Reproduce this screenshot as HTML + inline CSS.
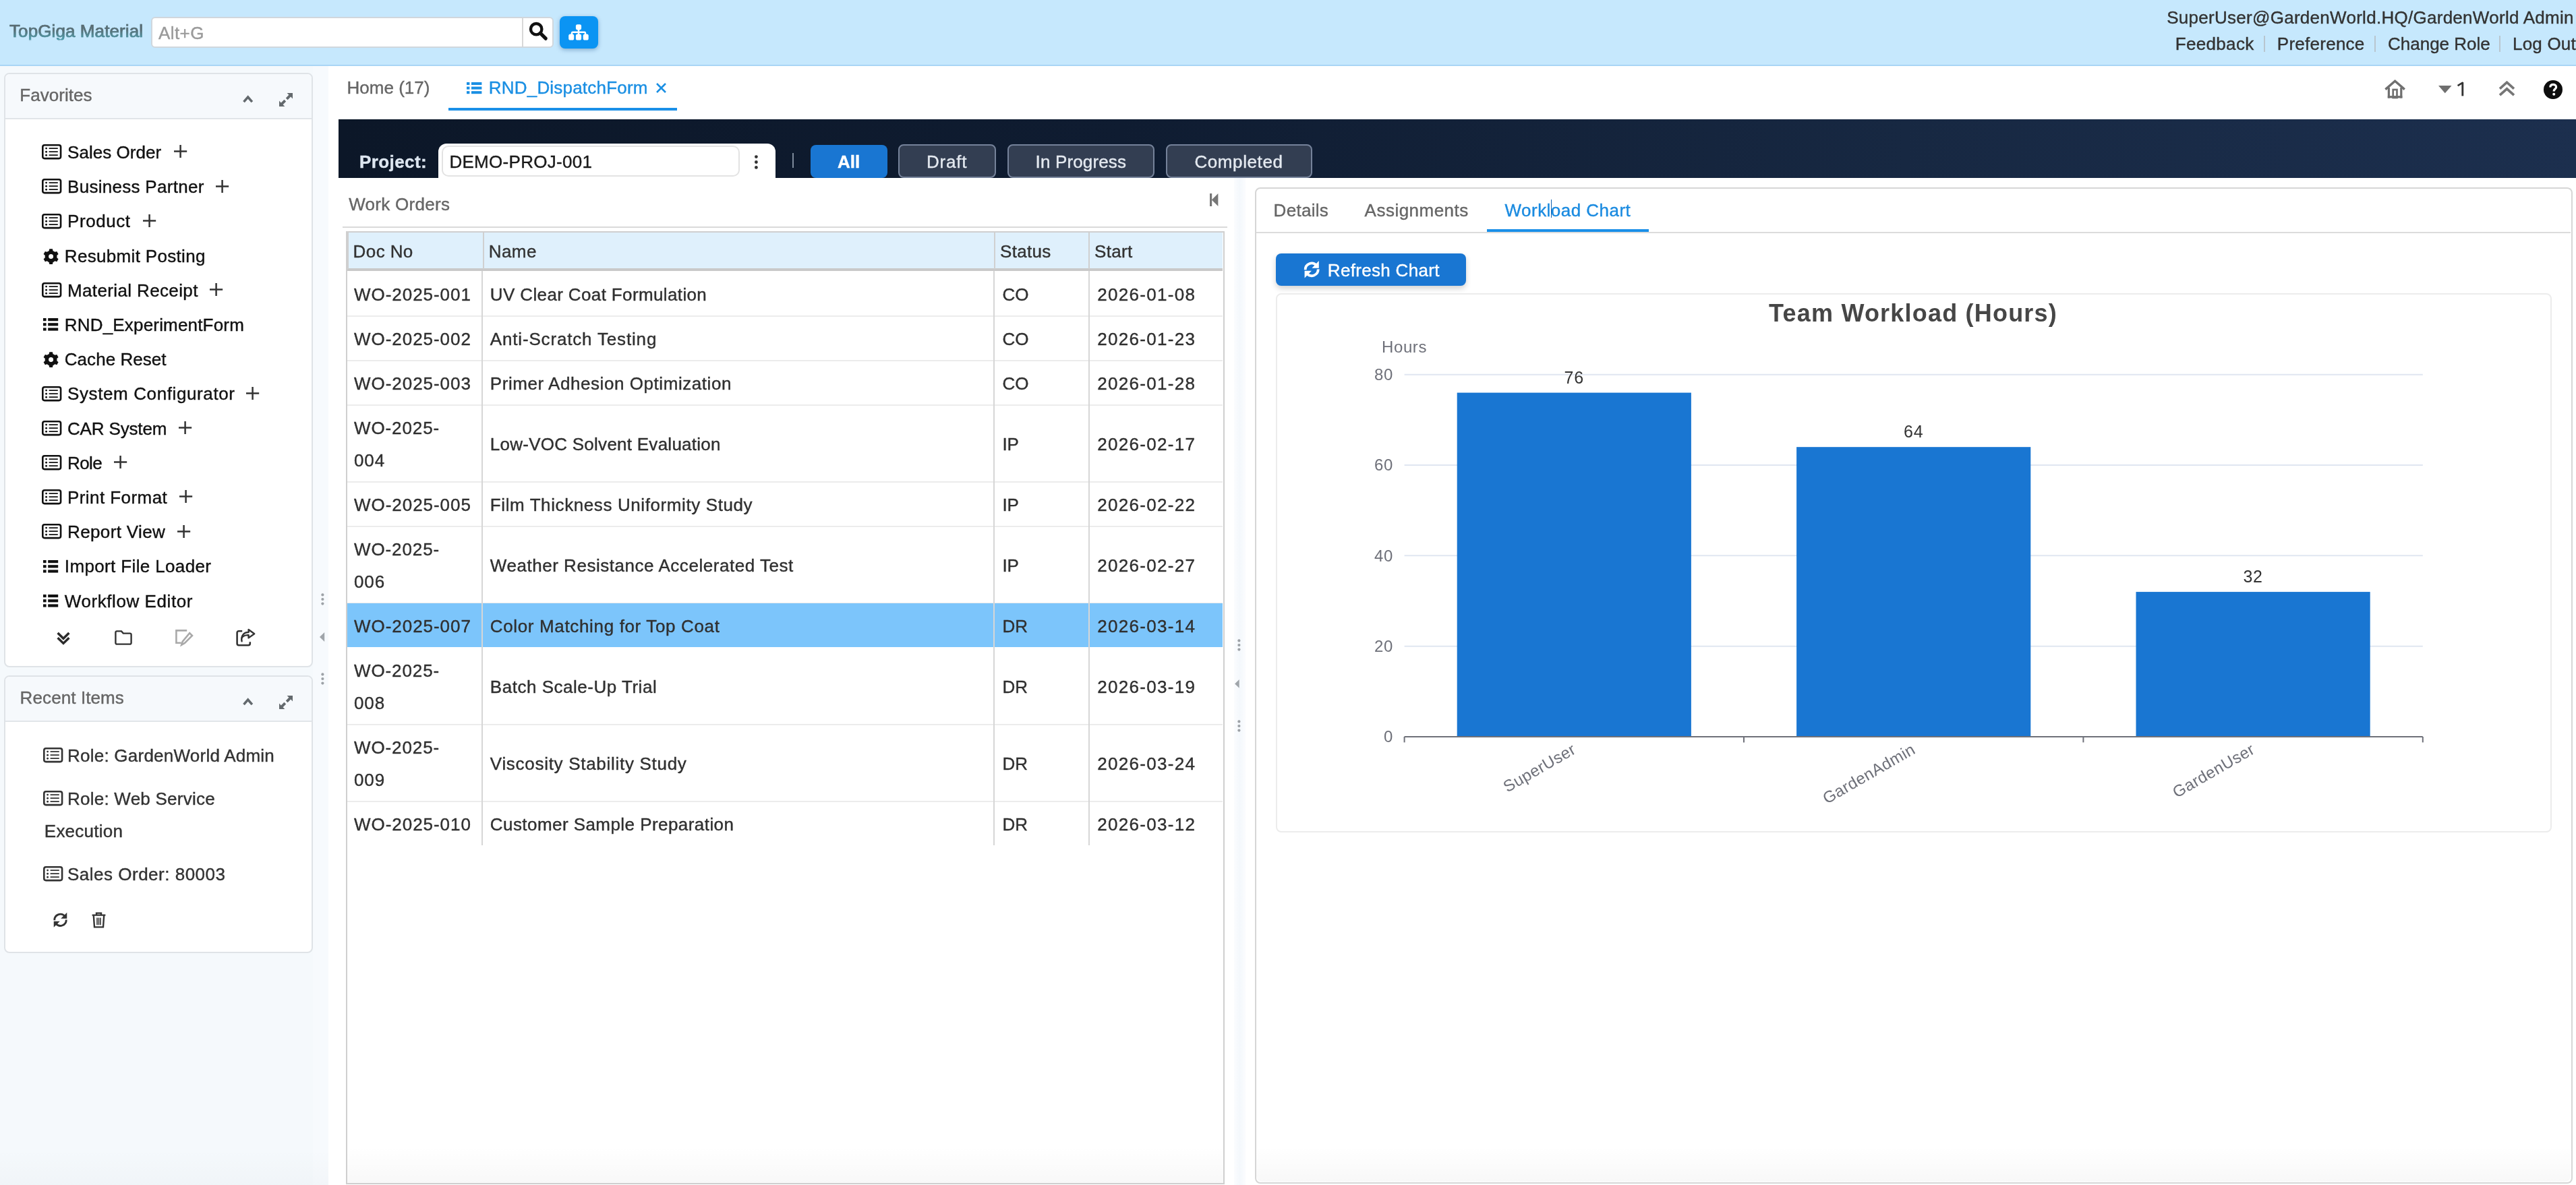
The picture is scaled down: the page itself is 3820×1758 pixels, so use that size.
<!DOCTYPE html>
<html><head><meta charset="utf-8">
<style>
html,body{margin:0;padding:0;background:#fff;overflow:hidden;}
body{width:3820px;height:1758px;}
#root{position:relative;width:1910px;height:879px;zoom:2;will-change:transform;overflow:hidden;font-family:"Liberation Sans",sans-serif;font-size:13px;color:#333;background:#fff;}
.a{position:absolute;}
.t{position:absolute;white-space:nowrap;line-height:1;-webkit-text-stroke:.2px currentColor;}
svg{position:absolute;overflow:visible;}
#hdr{left:0;top:0;width:1910px;height:48px;background:#c6e8fd;border-bottom:1px solid #a9d5f5;}
@media (max-width:2600px){body{width:1910px;height:879px;}#root{zoom:1;}}
</style></head>
<body><div id="root">
<!-- HEADER -->
<div id="hdr" class="a"></div>
<div class="t" style="left:7px;top:16.4px;font-size:13px;letter-spacing:.05px;background:linear-gradient(180deg,#5b666c 0%,#5b6a71 45%,#4aa6b6 100%);-webkit-background-clip:text;background-clip:text;color:transparent;-webkit-text-stroke:.35px rgba(80,130,140,.55);">TopGiga Material</div>
<div class="a" style="left:112px;top:12.3px;width:298.3px;height:23.2px;background:#fff;border:1px solid #d0d7dd;border-radius:3px;box-sizing:border-box;"></div>
<div class="a" style="left:387px;top:13.5px;width:1px;height:21px;background:#d8d8d8;"></div>
<div class="t" style="left:117.5px;top:18.2px;font-size:13px;color:#9a9a9a;letter-spacing:.2px;">Alt+G</div>
<svg style="left:392px;top:16px" width="14" height="14" viewBox="0 0 14 14"><circle cx="5.6" cy="5.6" r="4.1" fill="none" stroke="#111" stroke-width="2.2"/><path d="M8.6 8.6 L12.6 12.6" stroke="#111" stroke-width="2.6" stroke-linecap="round"/></svg>
<div class="a" style="left:415px;top:12px;width:28.5px;height:24px;background:#0b94f3;border-radius:4px;box-shadow:0 1px 3px rgba(0,60,120,.35);"></div>
<svg style="left:421.5px;top:17.8px" width="15" height="12" viewBox="0 0 15 12"><g fill="#fff"><rect x="5.45" y="0.1" width="4.1" height="4.1" rx="1.2"/><rect x="6.9" y="3.5" width="1.2" height="4"/><path d="M1.9 7.6V6.6A1.3 1.3 0 0 1 3.2 5.3H11.8A1.3 1.3 0 0 1 13.1 6.6V7.6H11.9V6.5H3.1V7.6Z"/><rect x="0.1" y="7.3" width="4.0" height="4.5" rx="1.3"/><rect x="5.45" y="7.3" width="4.1" height="4.5" rx="1.3"/><rect x="10.85" y="7.3" width="4.0" height="4.5" rx="1.3"/></g></svg>
<div class="t" style="left:1606.6px;top:6.5px;font-size:13px;color:#333;letter-spacing:.14px;">SuperUser@GardenWorld.HQ/GardenWorld Admin</div>
<div class="t" style="left:1612.9px;top:26px;font-size:13px;color:#333;letter-spacing:.16px;">Feedback</div>
<div class="a" style="left:1678.6px;top:26.5px;width:.8px;height:12px;background:#b9c6cf;"></div>
<div class="t" style="left:1688.4px;top:26px;font-size:13px;color:#333;letter-spacing:.13px;">Preference</div>
<div class="a" style="left:1760.7px;top:26.5px;width:.8px;height:12px;background:#b9c6cf;"></div>
<div class="t" style="left:1770.5px;top:26px;font-size:13px;color:#333;">Change Role</div>
<div class="a" style="left:1853.2px;top:26.5px;width:.8px;height:12px;background:#b9c6cf;"></div>
<div class="t" style="left:1863px;top:26px;font-size:13px;color:#333;letter-spacing:.1px;">Log Out</div>

<!-- LEFT PANEL -->
<div class="a" style="left:0.00px;top:49.00px;width:243.50px;height:830.00px;background:#f5f9fc;"></div>
<div class="a" style="left:232.00px;top:49.00px;width:11.50px;height:830.00px;background:#f7fafd;"></div>
<div class="a" style="left:3.00px;top:54.10px;width:228.90px;height:440.90px;background:#fff;border:1px solid #dfe3e7;border-radius:4px;box-sizing:border-box;"></div>
<div class="a" style="left:4.00px;top:55.10px;width:226.90px;height:32.20px;background:#f6f9fc;border-bottom:1px solid #e1e5e9;border-radius:3px 3px 0 0;"></div>
<div class="t" style="left:14.60px;top:64.10px;font-size:13px;color:#666;letter-spacing:0.03px;">Favorites</div>
<svg style="left:180.00px;top:70.60px;" width="7.7" height="5.8" viewBox="0 0 7.7 5.8"><path d="M.75 5.1L3.85 1.5L6.95 5.1" fill="none" stroke="#63696d" stroke-width="1.75"/></svg>
<svg style="left:207.00px;top:68.80px;" width="10" height="10" viewBox="0 0 10 10"><g fill="#63696d"><path d="M5.8 0H10V4.2L8.6 2.8L6.3 5.1L4.9 3.7L7.2 1.4Z"/><path d="M4.2 10H0V5.8L1.4 7.2L3.7 4.9L5.1 6.3L2.8 8.6Z"/></g></svg>
<svg style="left:31.00px;top:107.05px;" width="14.7" height="11.2" viewBox="0 0 14.7 11.2"><rect x=".65" y=".65" width="13.4" height="9.9" rx="1.4" fill="none" stroke="#111" stroke-width="1.3"/><g fill="#111"><circle cx="3.3" cy="3.05" r=".72"/><circle cx="3.3" cy="5.6" r=".72"/><circle cx="3.3" cy="8.1" r=".72"/></g><g stroke="#111" stroke-width=".9"><path d="M5.3 3.05H11.9M5.3 5.6H11.9M5.3 8.1H11.9"/></g></svg>
<div class="t" style="left:50.00px;top:106.45px;font-size:13px;color:#111;letter-spacing:0.02px;">Sales Order</div>
<svg style="left:129.00px;top:107.65px;" width="9.6" height="9.5" viewBox="0 0 9.6 9.5"><path d="M4.8 0V9.5M0 4.75H9.6" stroke="#333" stroke-width="1.25"/></svg>
<svg style="left:31.00px;top:132.65px;" width="14.7" height="11.2" viewBox="0 0 14.7 11.2"><rect x=".65" y=".65" width="13.4" height="9.9" rx="1.4" fill="none" stroke="#111" stroke-width="1.3"/><g fill="#111"><circle cx="3.3" cy="3.05" r=".72"/><circle cx="3.3" cy="5.6" r=".72"/><circle cx="3.3" cy="8.1" r=".72"/></g><g stroke="#111" stroke-width=".9"><path d="M5.3 3.05H11.9M5.3 5.6H11.9M5.3 8.1H11.9"/></g></svg>
<div class="t" style="left:50.00px;top:132.05px;font-size:13px;color:#111;letter-spacing:0.144px;">Business Partner</div>
<svg style="left:160.00px;top:133.25px;" width="9.6" height="9.5" viewBox="0 0 9.6 9.5"><path d="M4.8 0V9.5M0 4.75H9.6" stroke="#333" stroke-width="1.25"/></svg>
<svg style="left:31.00px;top:158.25px;" width="14.7" height="11.2" viewBox="0 0 14.7 11.2"><rect x=".65" y=".65" width="13.4" height="9.9" rx="1.4" fill="none" stroke="#111" stroke-width="1.3"/><g fill="#111"><circle cx="3.3" cy="3.05" r=".72"/><circle cx="3.3" cy="5.6" r=".72"/><circle cx="3.3" cy="8.1" r=".72"/></g><g stroke="#111" stroke-width=".9"><path d="M5.3 3.05H11.9M5.3 5.6H11.9M5.3 8.1H11.9"/></g></svg>
<div class="t" style="left:50.00px;top:157.65px;font-size:13px;color:#111;letter-spacing:0.284px;">Product</div>
<svg style="left:106.00px;top:158.85px;" width="9.6" height="9.5" viewBox="0 0 9.6 9.5"><path d="M4.8 0V9.5M0 4.75H9.6" stroke="#333" stroke-width="1.25"/></svg>
<svg style="left:31.75px;top:184.25px;" width="11.6" height="11.6" viewBox="0 0 11.6 11.6"><path d="M10.18 6.61 L11.30 7.64 L10.15 9.64 L8.69 9.18 L8.37 9.43 L8.03 9.65 L7.66 9.84 L7.28 10.00 L6.95 11.48 L4.65 11.48 L4.32 10.00 L3.94 9.84 L3.57 9.65 L3.23 9.43 L2.91 9.18 L1.45 9.64 L0.30 7.64 L1.42 6.61 L1.37 6.21 L1.35 5.80 L1.37 5.39 L1.42 4.99 L0.30 3.96 L1.45 1.96 L2.91 2.42 L3.23 2.17 L3.58 1.95 L3.94 1.76 L4.32 1.60 L4.65 0.12 L6.95 0.12 L7.28 1.60 L7.66 1.76 L8.02 1.95 L8.37 2.17 L8.69 2.42 L10.15 1.96 L11.30 3.96 L10.18 4.99 L10.23 5.39 L10.25 5.80 L10.23 6.21Z M5.8 4.05 A1.75 1.75 0 1 0 5.8 7.55 A1.75 1.75 0 1 0 5.8 4.05Z" fill="#111" fill-rule="evenodd"/></svg>
<div class="t" style="left:47.90px;top:183.25px;font-size:13px;color:#111;letter-spacing:0.163px;">Resubmit Posting</div>
<svg style="left:31.00px;top:209.45px;" width="14.7" height="11.2" viewBox="0 0 14.7 11.2"><rect x=".65" y=".65" width="13.4" height="9.9" rx="1.4" fill="none" stroke="#111" stroke-width="1.3"/><g fill="#111"><circle cx="3.3" cy="3.05" r=".72"/><circle cx="3.3" cy="5.6" r=".72"/><circle cx="3.3" cy="8.1" r=".72"/></g><g stroke="#111" stroke-width=".9"><path d="M5.3 3.05H11.9M5.3 5.6H11.9M5.3 8.1H11.9"/></g></svg>
<div class="t" style="left:50.00px;top:208.85px;font-size:13px;color:#111;letter-spacing:0.185px;">Material Receipt</div>
<svg style="left:155.60px;top:210.05px;" width="9.6" height="9.5" viewBox="0 0 9.6 9.5"><path d="M4.8 0V9.5M0 4.75H9.6" stroke="#333" stroke-width="1.25"/></svg>
<svg style="left:32.20px;top:236.15px;" width="11.1" height="9.3" viewBox="0 0 11.1 9.3"><g fill="#111"><rect x="0" y="0" width="2.3" height="2.1"/><rect x="0" y="3.6" width="2.3" height="2.1"/><rect x="0" y="7.2" width="2.3" height="2.1"/><rect x="3.6" y="0" width="7.5" height="2.1"/><rect x="3.6" y="3.6" width="7.5" height="2.1"/><rect x="3.6" y="7.2" width="7.5" height="2.1"/></g></svg>
<div class="t" style="left:47.90px;top:234.45px;font-size:13px;color:#111;letter-spacing:0.09px;">RND_ExperimentForm</div>
<svg style="left:31.75px;top:261.05px;" width="11.6" height="11.6" viewBox="0 0 11.6 11.6"><path d="M10.18 6.61 L11.30 7.64 L10.15 9.64 L8.69 9.18 L8.37 9.43 L8.03 9.65 L7.66 9.84 L7.28 10.00 L6.95 11.48 L4.65 11.48 L4.32 10.00 L3.94 9.84 L3.57 9.65 L3.23 9.43 L2.91 9.18 L1.45 9.64 L0.30 7.64 L1.42 6.61 L1.37 6.21 L1.35 5.80 L1.37 5.39 L1.42 4.99 L0.30 3.96 L1.45 1.96 L2.91 2.42 L3.23 2.17 L3.58 1.95 L3.94 1.76 L4.32 1.60 L4.65 0.12 L6.95 0.12 L7.28 1.60 L7.66 1.76 L8.02 1.95 L8.37 2.17 L8.69 2.42 L10.15 1.96 L11.30 3.96 L10.18 4.99 L10.23 5.39 L10.25 5.80 L10.23 6.21Z M5.8 4.05 A1.75 1.75 0 1 0 5.8 7.55 A1.75 1.75 0 1 0 5.8 4.05Z" fill="#111" fill-rule="evenodd"/></svg>
<div class="t" style="left:47.90px;top:260.05px;font-size:13px;color:#111;letter-spacing:0.022px;">Cache Reset</div>
<svg style="left:31.00px;top:286.25px;" width="14.7" height="11.2" viewBox="0 0 14.7 11.2"><rect x=".65" y=".65" width="13.4" height="9.9" rx="1.4" fill="none" stroke="#111" stroke-width="1.3"/><g fill="#111"><circle cx="3.3" cy="3.05" r=".72"/><circle cx="3.3" cy="5.6" r=".72"/><circle cx="3.3" cy="8.1" r=".72"/></g><g stroke="#111" stroke-width=".9"><path d="M5.3 3.05H11.9M5.3 5.6H11.9M5.3 8.1H11.9"/></g></svg>
<div class="t" style="left:50.00px;top:285.65px;font-size:13px;color:#111;letter-spacing:0.305px;">System Configurator</div>
<svg style="left:182.70px;top:286.85px;" width="9.6" height="9.5" viewBox="0 0 9.6 9.5"><path d="M4.8 0V9.5M0 4.75H9.6" stroke="#333" stroke-width="1.25"/></svg>
<svg style="left:31.00px;top:311.85px;" width="14.7" height="11.2" viewBox="0 0 14.7 11.2"><rect x=".65" y=".65" width="13.4" height="9.9" rx="1.4" fill="none" stroke="#111" stroke-width="1.3"/><g fill="#111"><circle cx="3.3" cy="3.05" r=".72"/><circle cx="3.3" cy="5.6" r=".72"/><circle cx="3.3" cy="8.1" r=".72"/></g><g stroke="#111" stroke-width=".9"><path d="M5.3 3.05H11.9M5.3 5.6H11.9M5.3 8.1H11.9"/></g></svg>
<div class="t" style="left:50.00px;top:311.25px;font-size:13px;color:#111;letter-spacing:-0.081px;">CAR System</div>
<svg style="left:132.60px;top:312.45px;" width="9.6" height="9.5" viewBox="0 0 9.6 9.5"><path d="M4.8 0V9.5M0 4.75H9.6" stroke="#333" stroke-width="1.25"/></svg>
<svg style="left:31.00px;top:337.45px;" width="14.7" height="11.2" viewBox="0 0 14.7 11.2"><rect x=".65" y=".65" width="13.4" height="9.9" rx="1.4" fill="none" stroke="#111" stroke-width="1.3"/><g fill="#111"><circle cx="3.3" cy="3.05" r=".72"/><circle cx="3.3" cy="5.6" r=".72"/><circle cx="3.3" cy="8.1" r=".72"/></g><g stroke="#111" stroke-width=".9"><path d="M5.3 3.05H11.9M5.3 5.6H11.9M5.3 8.1H11.9"/></g></svg>
<div class="t" style="left:50.00px;top:336.85px;font-size:13px;color:#111;letter-spacing:-0.287px;">Role</div>
<svg style="left:84.50px;top:338.05px;" width="9.6" height="9.5" viewBox="0 0 9.6 9.5"><path d="M4.8 0V9.5M0 4.75H9.6" stroke="#333" stroke-width="1.25"/></svg>
<svg style="left:31.00px;top:363.05px;" width="14.7" height="11.2" viewBox="0 0 14.7 11.2"><rect x=".65" y=".65" width="13.4" height="9.9" rx="1.4" fill="none" stroke="#111" stroke-width="1.3"/><g fill="#111"><circle cx="3.3" cy="3.05" r=".72"/><circle cx="3.3" cy="5.6" r=".72"/><circle cx="3.3" cy="8.1" r=".72"/></g><g stroke="#111" stroke-width=".9"><path d="M5.3 3.05H11.9M5.3 5.6H11.9M5.3 8.1H11.9"/></g></svg>
<div class="t" style="left:50.00px;top:362.45px;font-size:13px;color:#111;letter-spacing:0.215px;">Print Format</div>
<svg style="left:132.80px;top:363.65px;" width="9.6" height="9.5" viewBox="0 0 9.6 9.5"><path d="M4.8 0V9.5M0 4.75H9.6" stroke="#333" stroke-width="1.25"/></svg>
<svg style="left:31.00px;top:388.65px;" width="14.7" height="11.2" viewBox="0 0 14.7 11.2"><rect x=".65" y=".65" width="13.4" height="9.9" rx="1.4" fill="none" stroke="#111" stroke-width="1.3"/><g fill="#111"><circle cx="3.3" cy="3.05" r=".72"/><circle cx="3.3" cy="5.6" r=".72"/><circle cx="3.3" cy="8.1" r=".72"/></g><g stroke="#111" stroke-width=".9"><path d="M5.3 3.05H11.9M5.3 5.6H11.9M5.3 8.1H11.9"/></g></svg>
<div class="t" style="left:50.00px;top:388.05px;font-size:13px;color:#111;letter-spacing:0.184px;">Report View</div>
<svg style="left:131.30px;top:389.25px;" width="9.6" height="9.5" viewBox="0 0 9.6 9.5"><path d="M4.8 0V9.5M0 4.75H9.6" stroke="#333" stroke-width="1.25"/></svg>
<svg style="left:32.20px;top:415.35px;" width="11.1" height="9.3" viewBox="0 0 11.1 9.3"><g fill="#111"><rect x="0" y="0" width="2.3" height="2.1"/><rect x="0" y="3.6" width="2.3" height="2.1"/><rect x="0" y="7.2" width="2.3" height="2.1"/><rect x="3.6" y="0" width="7.5" height="2.1"/><rect x="3.6" y="3.6" width="7.5" height="2.1"/><rect x="3.6" y="7.2" width="7.5" height="2.1"/></g></svg>
<div class="t" style="left:47.90px;top:413.65px;font-size:13px;color:#111;letter-spacing:0.183px;">Import File Loader</div>
<svg style="left:32.20px;top:440.95px;" width="11.1" height="9.3" viewBox="0 0 11.1 9.3"><g fill="#111"><rect x="0" y="0" width="2.3" height="2.1"/><rect x="0" y="3.6" width="2.3" height="2.1"/><rect x="0" y="7.2" width="2.3" height="2.1"/><rect x="3.6" y="0" width="7.5" height="2.1"/><rect x="3.6" y="3.6" width="7.5" height="2.1"/><rect x="3.6" y="7.2" width="7.5" height="2.1"/></g></svg>
<div class="t" style="left:47.90px;top:439.25px;font-size:13px;color:#111;letter-spacing:0.287px;">Workflow Editor</div>
<svg style="left:41.80px;top:468.60px;" width="10" height="9.6" viewBox="0 0 10 9.6"><path d="M.8 1L5 5.1L9.2 1M.8 4.6L5 8.7L9.2 4.6" fill="none" stroke="#2b2b2b" stroke-width="1.75"/></svg>
<svg style="left:85.00px;top:467.50px;" width="13" height="11" viewBox="0 0 13 11"><path d="M1.6 .7H5L6.4 2.3H11.4A.9 .9 0 0 1 12.3 3.2V9.4A.9 .9 0 0 1 11.4 10.3H1.6A.9 .9 0 0 1 .7 9.4V1.6A.9 .9 0 0 1 1.6 .7Z" fill="none" stroke="#333" stroke-width="1.2"/></svg>
<svg style="left:130.00px;top:466.80px;" width="13.2" height="12.4" viewBox="0 0 13.2 12.4"><path d="M8.6 .7H.7V9.9H4.4" fill="none" stroke="#a9a9a9" stroke-width="1.3"/><path d="M10.6 2.6L12.5 4.5L7 10L4.6 11.4L5.4 8.8Z" fill="none" stroke="#a9a9a9" stroke-width="1.3"/></svg>
<svg style="left:175.00px;top:466.50px;" width="14.5" height="12.8" viewBox="0 0 14.5 12.8"><path d="M4.6 1.6H2A1.2 1.2 0 0 0 .8 2.8V10.9A1.2 1.2 0 0 0 2 12.1H9.2A1.2 1.2 0 0 0 10.4 10.9V9.6" fill="none" stroke="#333" stroke-width="1.3"/><path d="M4.3 9.2C3.4 6.2 5.6 4.4 9.3 4.6V6.7L13.6 3.6L9.3 .5V2.5C5.8 2.4 3.4 5.2 4.3 9.2Z" fill="none" stroke="#333" stroke-width="1.2" stroke-linejoin="round"/></svg>
<div class="a" style="left:3.00px;top:501.00px;width:228.90px;height:206.00px;background:#fff;border:1px solid #dfe3e7;border-radius:4px;box-sizing:border-box;"></div>
<div class="a" style="left:4.00px;top:502.00px;width:226.90px;height:32.50px;background:#f6f9fc;border-bottom:1px solid #e1e5e9;border-radius:3px 3px 0 0;"></div>
<div class="t" style="left:14.80px;top:510.90px;font-size:13px;color:#666;letter-spacing:0.05px;">Recent Items</div>
<svg style="left:180.00px;top:517.60px;" width="7.7" height="5.8" viewBox="0 0 7.7 5.8"><path d="M.75 5.1L3.85 1.5L6.95 5.1" fill="none" stroke="#63696d" stroke-width="1.75"/></svg>
<svg style="left:206.80px;top:515.80px;" width="10" height="10" viewBox="0 0 10 10"><g fill="#63696d"><path d="M5.8 0H10V4.2L8.6 2.8L6.3 5.1L4.9 3.7L7.2 1.4Z"/><path d="M4.2 10H0V5.8L1.4 7.2L3.7 4.9L5.1 6.3L2.8 8.6Z"/></g></svg>
<svg style="left:32.00px;top:554.60px;" width="14.7" height="11.2" viewBox="0 0 14.7 11.2"><rect x=".65" y=".65" width="13.4" height="9.9" rx="1.4" fill="none" stroke="#333" stroke-width="1.3"/><g fill="#333"><circle cx="3.3" cy="3.05" r=".72"/><circle cx="3.3" cy="5.6" r=".72"/><circle cx="3.3" cy="8.1" r=".72"/></g><g stroke="#333" stroke-width=".9"><path d="M5.3 3.05H11.9M5.3 5.6H11.9M5.3 8.1H11.9"/></g></svg>
<div class="t" style="left:50.00px;top:554.00px;font-size:13px;color:#333;letter-spacing:0.12px;">Role: GardenWorld Admin</div>
<svg style="left:32.00px;top:586.60px;" width="14.7" height="11.2" viewBox="0 0 14.7 11.2"><rect x=".65" y=".65" width="13.4" height="9.9" rx="1.4" fill="none" stroke="#333" stroke-width="1.3"/><g fill="#333"><circle cx="3.3" cy="3.05" r=".72"/><circle cx="3.3" cy="5.6" r=".72"/><circle cx="3.3" cy="8.1" r=".72"/></g><g stroke="#333" stroke-width=".9"><path d="M5.3 3.05H11.9M5.3 5.6H11.9M5.3 8.1H11.9"/></g></svg>
<div class="t" style="left:50.00px;top:586.00px;font-size:13px;color:#333;letter-spacing:0.12px;">Role: Web Service</div>
<div class="t" style="left:32.90px;top:610.00px;font-size:13px;color:#333;letter-spacing:0.12px;">Execution</div>
<svg style="left:32.00px;top:642.60px;" width="14.7" height="11.2" viewBox="0 0 14.7 11.2"><rect x=".65" y=".65" width="13.4" height="9.9" rx="1.4" fill="none" stroke="#333" stroke-width="1.3"/><g fill="#333"><circle cx="3.3" cy="3.05" r=".72"/><circle cx="3.3" cy="5.6" r=".72"/><circle cx="3.3" cy="8.1" r=".72"/></g><g stroke="#333" stroke-width=".9"><path d="M5.3 3.05H11.9M5.3 5.6H11.9M5.3 8.1H11.9"/></g></svg>
<div class="t" style="left:50.00px;top:642.00px;font-size:13px;color:#333;letter-spacing:0.25px;">Sales Order: 80003</div>
<svg style="left:39.00px;top:676.70px;" width="11.5" height="11.8" viewBox="0 0 12.2 12.8"><path d="M1.35 6.6A4.75 4.75 0 0 1 9.6 3.3M10.85 6.2A4.75 4.75 0 0 1 2.6 9.5" fill="none" stroke="#333" stroke-width="1.55"/><path d="M11.4 .4V5.3H6.5Z M.8 12.4V7.5H5.7Z" fill="#333"/></svg>
<svg style="left:68.00px;top:676.50px;" width="10.5" height="12" viewBox="0 0 10.5 12"><path d="M.3 2.3H10.2M3.5 2.2V.8H7V2.2" fill="none" stroke="#333" stroke-width="1.2"/><path d="M1.4 2.6L2 11.2H8.5L9.1 2.6" fill="none" stroke="#333" stroke-width="1.2"/><path d="M4 4.3V9.6M5.25 4.3V9.6M6.5 4.3V9.6" stroke="#333" stroke-width=".8"/></svg>
<div class="a" style="left:0.00px;top:852.00px;width:243.50px;height:27.00px;background:linear-gradient(180deg,rgba(0,20,60,0),rgba(0,20,60,.018));"></div>
<svg style="left:237.80px;top:440.00px;" width="2.4" height="9" viewBox="0 0 2.4 9"><g fill="#9da2a7"><circle cx="1.2" cy="1.2" r="1.05"/><circle cx="1.2" cy="4.5" r="1.05"/><circle cx="1.2" cy="7.8" r="1.05"/></g></svg>
<svg style="left:237.80px;top:499.00px;" width="2.4" height="9" viewBox="0 0 2.4 9"><g fill="#9da2a7"><circle cx="1.2" cy="1.2" r="1.05"/><circle cx="1.2" cy="4.5" r="1.05"/><circle cx="1.2" cy="7.8" r="1.05"/></g></svg>
<svg style="left:237.00px;top:469.00px;" width="3.6" height="7" viewBox="0 0 3.6 7"><path d="M3.6 0V7L0 3.5Z" fill="#a0a5aa"/></svg>
<!-- MAIN -->
<div class="t" style="left:257.30px;top:58.60px;font-size:13px;color:#666;">Home (17)</div>
<svg style="left:346.20px;top:61.20px;" width="11.2" height="8.6" viewBox="0 0 11.2 8.6"><g fill="#1a8fe3"><rect x="0" y="0" width="2.2" height="2"/><rect x="0" y="3.3" width="2.2" height="2"/><rect x="0" y="6.6" width="2.2" height="2"/><rect x="3.5" y="0" width="7.7" height="2"/><rect x="3.5" y="3.3" width="7.7" height="2"/><rect x="3.5" y="6.6" width="7.7" height="2"/></g></svg>
<div class="t" style="left:362.40px;top:58.60px;font-size:13px;color:#1a8fe3;letter-spacing:0.1px;">RND_DispatchForm</div>
<svg style="left:486.30px;top:61.50px;" width="7.5" height="7.5" viewBox="0 0 7.5 7.5"><path d="M.5 .5L7 7M7 .5L.5 7" stroke="#1a8fe3" stroke-width="1.3"/></svg>
<div class="a" style="left:332.60px;top:79.80px;width:169.20px;height:2.00px;background:#1a8fe8;"></div>
<svg style="left:1768.00px;top:59.20px;" width="15.6" height="13.8" viewBox="0 0 15.6 13.8"><path d="M.7 7.3L7.8 1.1L14.9 7.3" fill="none" stroke="#6f6f6f" stroke-width="1.7"/><path d="M3.2 6V13.7M12.4 6V13.7" stroke="#6f6f6f" stroke-width="1.6"/><path d="M2.4 12.9H13.2" stroke="#6f6f6f" stroke-width="1.7"/><rect x="6.35" y="7.5" width="2.9" height="6" fill="none" stroke="#6f6f6f" stroke-width="1.35"/></svg>
<svg style="left:1807.80px;top:63.60px;" width="9.8" height="5.6" viewBox="0 0 9.8 5.6"><path d="M0 0H9.8L4.9 5.6Z" fill="#6f6f6f"/></svg>
<svg style="left:1822.20px;top:60.90px;" width="4.8" height="10.2" viewBox="0 0 4.8 10.2"><path d="M3.9 0V10.2" stroke="#333" stroke-width="1.45"/><path d="M4.2 .2L.3 2.6" stroke="#333" stroke-width="1.3"/></svg>
<svg style="left:1852.50px;top:60.00px;" width="12.5" height="11.3" viewBox="0 0 12.5 11.3"><path d="M1 5.8L6.25 1.1L11.5 5.8M1 10.6L6.25 5.9L11.5 10.6" fill="none" stroke="#767676" stroke-width="1.85"/></svg>
<svg style="left:1886.00px;top:59.40px;" width="14" height="14" viewBox="0 0 14 14"><circle cx="7" cy="7" r="7" fill="#0d0d0d"/><path d="M4.9 5.3C4.9 4 5.8 3.2 7.1 3.2C8.4 3.2 9.3 4 9.3 5.1C9.3 6.4 7.6 6.6 7.6 8V8.3" fill="none" stroke="#fff" stroke-width="1.6"/><circle cx="7.6" cy="10.4" r="1" fill="#fff"/></svg>
<div class="a" style="left:251.00px;top:88.70px;width:1659.00px;height:43.30px;background:linear-gradient(90deg,#0c1728 0%,#0f1c31 35%,#172842 70%,#1c2f4e 100%);overflow:hidden;"></div>
<div class="t" style="left:266.50px;top:113.50px;font-size:13px;color:#dde6f0;letter-spacing:0.2px;font-weight:bold;">Project:</div>
<div class="a" style="left:324.80px;top:106.30px;width:250.10px;height:25.70px;background:#fff;border-radius:6px 6px 0 0;"></div>
<div class="a" style="left:327.60px;top:108.00px;width:220.80px;height:23.20px;background:#fff;border:1px solid #e3e3e3;border-radius:5px;box-sizing:border-box;"></div>
<div class="t" style="left:333.20px;top:113.50px;font-size:13px;color:#1a1a1a;letter-spacing:0.15px;">DEMO-PROJ-001</div>
<svg style="left:559.70px;top:115.00px;" width="2.4" height="10.5" viewBox="0 0 2.4 10.5"><g fill="#333"><circle cx="1.2" cy="1.3" r="1.2"/><circle cx="1.2" cy="5.25" r="1.2"/><circle cx="1.2" cy="9.2" r="1.2"/></g></svg>
<div class="a" style="left:587.50px;top:113.40px;width:0.90px;height:11.10px;background:#7d8a9b;"></div>
<div class="a" style="left:600.80px;top:107.40px;width:57.30px;height:24.60px;background:#1976d2;border-radius:4px;"></div>
<div class="t" style="left:621.00px;top:113.50px;font-size:13px;color:#fff;font-weight:bold;">All</div>
<div class="a" style="left:666.10px;top:107.20px;width:72.30px;height:24.80px;background:#333e52;border:1px solid #75829a;border-radius:4px;box-sizing:border-box;"></div>
<div class="t" style="left:687.00px;top:113.50px;font-size:13px;color:#e4e9f0;letter-spacing:0.4px;">Draft</div>
<div class="a" style="left:746.80px;top:107.20px;width:109.30px;height:24.80px;background:#333e52;border:1px solid #75829a;border-radius:4px;box-sizing:border-box;"></div>
<div class="t" style="left:767.80px;top:113.50px;font-size:13px;color:#e4e9f0;letter-spacing:0.07px;">In Progress</div>
<div class="a" style="left:864.60px;top:107.20px;width:108.20px;height:24.80px;background:#333e52;border:1px solid #75829a;border-radius:4px;box-sizing:border-box;"></div>
<div class="t" style="left:885.70px;top:113.50px;font-size:13px;color:#e4e9f0;letter-spacing:0.3px;">Completed</div>
<div class="t" style="left:258.60px;top:144.90px;font-size:13px;color:#666;letter-spacing:0.15px;">Work Orders</div>
<svg style="left:897.00px;top:143.50px;" width="6.2" height="9.5" viewBox="0 0 6.2 9.5"><rect x="0" y="0" width="1.6" height="9.5" fill="#777"/><path d="M6.2 0V9.5L1.4 4.75Z" fill="#777"/></svg>
<div class="a" style="left:254.00px;top:168.00px;width:656.00px;height:1.00px;background:#dadada;"></div>
<div class="a" style="left:256.50px;top:171.30px;width:651.50px;height:707.00px;background:#fff;border:1px solid #cfcfcf;box-sizing:border-box;"></div>
<div class="a" style="left:257.50px;top:172.30px;width:649.00px;height:26.70px;background:#dff0fc;"></div>
<div class="a" style="left:257.50px;top:199.00px;width:649.00px;height:2.00px;background:#c9c9c9;"></div>
<div class="a" style="left:257.50px;top:172.30px;width:1.20px;height:27.00px;background:#cfcfcf;"></div>
<div class="a" style="left:357.80px;top:172.30px;width:1.00px;height:27.00px;background:#d0d0d0;"></div>
<div class="a" style="left:737.10px;top:172.30px;width:1.00px;height:27.00px;background:#d0d0d0;"></div>
<div class="a" style="left:807.00px;top:172.30px;width:1.00px;height:27.00px;background:#d0d0d0;"></div>
<div class="t" style="left:261.80px;top:179.80px;font-size:13px;color:#333;letter-spacing:0.2px;">Doc No</div>
<div class="t" style="left:362.40px;top:179.80px;font-size:13px;color:#333;letter-spacing:0.2px;">Name</div>
<div class="t" style="left:741.50px;top:179.80px;font-size:13px;color:#333;letter-spacing:0.15px;">Status</div>
<div class="t" style="left:811.50px;top:179.80px;font-size:13px;color:#333;letter-spacing:0.15px;">Start</div>
<div class="a" style="left:257.50px;top:233.80px;width:649.00px;height:1.00px;background:#ececec;"></div>
<div class="t" style="left:262.50px;top:212.20px;font-size:13px;color:#303030;letter-spacing:0.48px;">WO-2025-001</div>
<div class="t" style="left:363.40px;top:212.20px;font-size:13px;color:#303030;letter-spacing:0.18559999999999946px;">UV Clear Coat Formulation</div>
<div class="t" style="left:743.20px;top:212.20px;font-size:13px;color:#303030;">CO</div>
<div class="t" style="left:813.60px;top:212.20px;font-size:13px;color:#303030;letter-spacing:0.65px;">2026-01-08</div>
<div class="a" style="left:257.50px;top:266.80px;width:649.00px;height:1.00px;background:#ececec;"></div>
<div class="t" style="left:262.50px;top:245.20px;font-size:13px;color:#303030;letter-spacing:0.48px;">WO-2025-002</div>
<div class="t" style="left:363.40px;top:245.20px;font-size:13px;color:#303030;letter-spacing:0.41600000000000037px;">Anti-Scratch Testing</div>
<div class="t" style="left:743.20px;top:245.20px;font-size:13px;color:#303030;">CO</div>
<div class="t" style="left:813.60px;top:245.20px;font-size:13px;color:#303030;letter-spacing:0.65px;">2026-01-23</div>
<div class="a" style="left:257.50px;top:299.80px;width:649.00px;height:1.00px;background:#ececec;"></div>
<div class="t" style="left:262.50px;top:278.20px;font-size:13px;color:#303030;letter-spacing:0.48px;">WO-2025-003</div>
<div class="t" style="left:363.40px;top:278.20px;font-size:13px;color:#303030;letter-spacing:0.28035714285714264px;">Primer Adhesion Optimization</div>
<div class="t" style="left:743.20px;top:278.20px;font-size:13px;color:#303030;">CO</div>
<div class="t" style="left:813.60px;top:278.20px;font-size:13px;color:#303030;letter-spacing:0.65px;">2026-01-28</div>
<div class="a" style="left:257.50px;top:356.80px;width:649.00px;height:1.00px;background:#ececec;"></div>
<div class="t" style="left:262.50px;top:311.00px;font-size:13px;color:#303030;letter-spacing:0.45px;">WO-2025-</div>
<div class="t" style="left:262.50px;top:335.00px;font-size:13px;color:#303030;letter-spacing:0.45px;">004</div>
<div class="t" style="left:363.40px;top:323.20px;font-size:13px;color:#303030;letter-spacing:0.1284615384615386px;">Low-VOC Solvent Evaluation</div>
<div class="t" style="left:743.20px;top:323.20px;font-size:13px;color:#303030;">IP</div>
<div class="t" style="left:813.60px;top:323.20px;font-size:13px;color:#303030;letter-spacing:0.65px;">2026-02-17</div>
<div class="a" style="left:257.50px;top:389.80px;width:649.00px;height:1.00px;background:#ececec;"></div>
<div class="t" style="left:262.50px;top:368.20px;font-size:13px;color:#303030;letter-spacing:0.48px;">WO-2025-005</div>
<div class="t" style="left:363.40px;top:368.20px;font-size:13px;color:#303030;letter-spacing:0.29935483870967744px;">Film Thickness Uniformity Study</div>
<div class="t" style="left:743.20px;top:368.20px;font-size:13px;color:#303030;">IP</div>
<div class="t" style="left:813.60px;top:368.20px;font-size:13px;color:#303030;letter-spacing:0.65px;">2026-02-22</div>
<div class="a" style="left:257.50px;top:446.80px;width:649.00px;height:1.00px;background:#ececec;"></div>
<div class="t" style="left:262.50px;top:401.00px;font-size:13px;color:#303030;letter-spacing:0.45px;">WO-2025-</div>
<div class="t" style="left:262.50px;top:425.00px;font-size:13px;color:#303030;letter-spacing:0.45px;">006</div>
<div class="t" style="left:363.40px;top:413.20px;font-size:13px;color:#303030;letter-spacing:0.26885714285714274px;">Weather Resistance Accelerated Test</div>
<div class="t" style="left:743.20px;top:413.20px;font-size:13px;color:#303030;">IP</div>
<div class="t" style="left:813.60px;top:413.20px;font-size:13px;color:#303030;letter-spacing:0.65px;">2026-02-27</div>
<div class="a" style="left:257.50px;top:447.50px;width:649.00px;height:32.50px;background:#7cc5fb;"></div>
<div class="t" style="left:262.50px;top:458.20px;font-size:13px;color:#303030;letter-spacing:0.48px;">WO-2025-007</div>
<div class="t" style="left:363.40px;top:458.20px;font-size:13px;color:#303030;letter-spacing:0.32518518518518524px;">Color Matching for Top Coat</div>
<div class="t" style="left:743.20px;top:458.20px;font-size:13px;color:#303030;">DR</div>
<div class="t" style="left:813.60px;top:458.20px;font-size:13px;color:#303030;letter-spacing:0.65px;">2026-03-14</div>
<div class="a" style="left:257.50px;top:536.80px;width:649.00px;height:1.00px;background:#ececec;"></div>
<div class="t" style="left:262.50px;top:491.00px;font-size:13px;color:#303030;letter-spacing:0.45px;">WO-2025-</div>
<div class="t" style="left:262.50px;top:515.00px;font-size:13px;color:#303030;letter-spacing:0.45px;">008</div>
<div class="t" style="left:363.40px;top:503.20px;font-size:13px;color:#303030;letter-spacing:0.2600000000000001px;">Batch Scale-Up Trial</div>
<div class="t" style="left:743.20px;top:503.20px;font-size:13px;color:#303030;">DR</div>
<div class="t" style="left:813.60px;top:503.20px;font-size:13px;color:#303030;letter-spacing:0.65px;">2026-03-19</div>
<div class="a" style="left:257.50px;top:593.80px;width:649.00px;height:1.00px;background:#ececec;"></div>
<div class="t" style="left:262.50px;top:548.00px;font-size:13px;color:#303030;letter-spacing:0.45px;">WO-2025-</div>
<div class="t" style="left:262.50px;top:572.00px;font-size:13px;color:#303030;letter-spacing:0.45px;">009</div>
<div class="t" style="left:363.40px;top:560.20px;font-size:13px;color:#303030;letter-spacing:0.35399999999999976px;">Viscosity Stability Study</div>
<div class="t" style="left:743.20px;top:560.20px;font-size:13px;color:#303030;">DR</div>
<div class="t" style="left:813.60px;top:560.20px;font-size:13px;color:#303030;letter-spacing:0.65px;">2026-03-24</div>
<div class="t" style="left:262.50px;top:605.20px;font-size:13px;color:#303030;letter-spacing:0.48px;">WO-2025-010</div>
<div class="t" style="left:363.40px;top:605.20px;font-size:13px;color:#303030;letter-spacing:0.21999999999999992px;">Customer Sample Preparation</div>
<div class="t" style="left:743.20px;top:605.20px;font-size:13px;color:#303030;">DR</div>
<div class="t" style="left:813.60px;top:605.20px;font-size:13px;color:#303030;letter-spacing:0.65px;">2026-03-12</div>
<div class="a" style="left:357.00px;top:201.00px;width:1.00px;height:426.00px;background:#d6d6d6;"></div>
<div class="a" style="left:736.60px;top:201.00px;width:1.00px;height:426.00px;background:#d6d6d6;"></div>
<div class="a" style="left:807.00px;top:201.00px;width:1.00px;height:426.00px;background:#d6d6d6;"></div>
<div class="a" style="left:915.00px;top:132.00px;width:8.50px;height:747.00px;background:linear-gradient(90deg,#fbfcfe,#f4f8fc 50%,#fbfcfe);"></div>
<svg style="left:917.30px;top:474.00px;" width="2.4" height="9" viewBox="0 0 2.4 9"><g fill="#9da2a7"><circle cx="1.2" cy="1.2" r="1.05"/><circle cx="1.2" cy="4.5" r="1.05"/><circle cx="1.2" cy="7.8" r="1.05"/></g></svg>
<svg style="left:917.30px;top:534.00px;" width="2.4" height="9" viewBox="0 0 2.4 9"><g fill="#9da2a7"><circle cx="1.2" cy="1.2" r="1.05"/><circle cx="1.2" cy="4.5" r="1.05"/><circle cx="1.2" cy="7.8" r="1.05"/></g></svg>
<svg style="left:915.30px;top:504.20px;" width="3.4" height="6.4" viewBox="0 0 3.6 7"><path d="M3.6 0V7L0 3.5Z" fill="#a0a5aa"/></svg>
<div class="a" style="left:930.40px;top:139.00px;width:977.30px;height:739.00px;background:#fff;border:1px solid #d6d6d6;border-radius:4px;box-sizing:border-box;"></div>
<div class="a" style="left:931.40px;top:172.20px;width:974.80px;height:1.00px;background:#dcdcdc;"></div>
<div class="t" style="left:944.30px;top:149.60px;font-size:13px;color:#666;letter-spacing:0.14px;">Details</div>
<div class="t" style="left:1011.80px;top:149.60px;font-size:13px;color:#666;letter-spacing:0.24px;">Assignments</div>
<div class="t" style="left:1115.80px;top:149.60px;font-size:13px;color:#1b8be0;letter-spacing:0.23px;">Workload Chart</div>
<div class="a" style="left:1149.80px;top:148.00px;width:0.80px;height:13.60px;background:#0d5fb0;"></div>
<div class="a" style="left:1102.50px;top:170.00px;width:119.90px;height:2.20px;background:#1a8fe8;"></div>
<div class="a" style="left:946.00px;top:188.00px;width:141.00px;height:24.00px;background:#1976d2;border-radius:4px;box-shadow:0 2px 4px rgba(0,0,0,.18);"></div>
<svg style="left:966.40px;top:193.50px;" width="12.2" height="12.8" viewBox="0 0 12.2 12.8"><path d="M1.35 6.6A4.75 4.75 0 0 1 9.6 3.3M10.85 6.2A4.75 4.75 0 0 1 2.6 9.5" fill="none" stroke="#fff" stroke-width="1.9"/><path d="M11.4 0V5.4H6.2Z M.8 12.8V7.4H6Z" fill="#fff"/></svg>
<div class="t" style="left:984.40px;top:193.80px;font-size:13px;color:#fff;letter-spacing:0.16px;font-weight:500;">Refresh Chart</div>
<div class="a" style="left:946.00px;top:217.50px;width:945.80px;height:399.80px;background:#fff;border:1px solid #ececec;border-radius:4px;box-sizing:border-box;"></div>
<div class="a" style="left:257.50px;top:850.00px;width:649.50px;height:27.30px;background:linear-gradient(180deg,rgba(0,0,0,0),rgba(0,0,0,.028));"></div>
<div class="a" style="left:931.40px;top:850.00px;width:974.80px;height:26.60px;background:linear-gradient(180deg,rgba(0,0,0,0),rgba(0,0,0,.028));border-radius:0 0 4px 4px;"></div>
<svg style="left:0;top:0" width="1910" height="879" viewBox="0 0 1910 879" font-family="Liberation Sans, sans-serif"><line x1="1041.3" y1="479.34000000000003" x2="1796.4" y2="479.34000000000003" stroke="#E0E6F1" stroke-width="1"/><line x1="1041.3" y1="412.18" x2="1796.4" y2="412.18" stroke="#E0E6F1" stroke-width="1"/><line x1="1041.3" y1="345.02" x2="1796.4" y2="345.02" stroke="#E0E6F1" stroke-width="1"/><line x1="1041.3" y1="277.86" x2="1796.4" y2="277.86" stroke="#E0E6F1" stroke-width="1"/><rect x="1080.35" y="291.29" width="173.6" height="255.21" fill="#1976d2"/><text x="1167.15" y="284.29" text-anchor="middle" font-size="12.5" fill="#333" letter-spacing=".4">76</text><text transform="translate(1167.15,554.50) rotate(-30)" x="0" y="4.3" text-anchor="end" font-size="12" fill="#6E7079" letter-spacing=".25">SuperUser</text><rect x="1332.05" y="331.59" width="173.6" height="214.91" fill="#1976d2"/><text x="1418.85" y="324.59" text-anchor="middle" font-size="12.5" fill="#333" letter-spacing=".4">64</text><text transform="translate(1418.85,554.50) rotate(-30)" x="0" y="4.3" text-anchor="end" font-size="12" fill="#6E7079" letter-spacing=".25">GardenAdmin</text><rect x="1583.75" y="439.04" width="173.6" height="107.46" fill="#1976d2"/><text x="1670.55" y="432.04" text-anchor="middle" font-size="12.5" fill="#333" letter-spacing=".4">32</text><text transform="translate(1670.55,554.50) rotate(-30)" x="0" y="4.3" text-anchor="end" font-size="12" fill="#6E7079" letter-spacing=".25">GardenUser</text><line x1="1041.3" y1="546.5" x2="1796.4" y2="546.5" stroke="#6E7079" stroke-width="1"/><line x1="1041.30" y1="546.5" x2="1041.30" y2="550.7" stroke="#6E7079" stroke-width="1"/><line x1="1293.00" y1="546.5" x2="1293.00" y2="550.7" stroke="#6E7079" stroke-width="1"/><line x1="1544.70" y1="546.5" x2="1544.70" y2="550.7" stroke="#6E7079" stroke-width="1"/><line x1="1796.40" y1="546.5" x2="1796.40" y2="550.7" stroke="#6E7079" stroke-width="1"/><text x="1033" y="550.70" text-anchor="end" font-size="12" fill="#6E7079" letter-spacing=".3">0</text><text x="1033" y="483.54" text-anchor="end" font-size="12" fill="#6E7079" letter-spacing=".3">20</text><text x="1033" y="416.38" text-anchor="end" font-size="12" fill="#6E7079" letter-spacing=".3">40</text><text x="1033" y="349.22" text-anchor="end" font-size="12" fill="#6E7079" letter-spacing=".3">60</text><text x="1033" y="282.06" text-anchor="end" font-size="12" fill="#6E7079" letter-spacing=".3">80</text><text x="1024.5" y="261.5" font-size="12" fill="#6E7079" letter-spacing=".3">Hours</text><text x="1418.5" y="238.6" text-anchor="middle" font-size="18" font-weight="bold" fill="#464646" letter-spacing=".6">Team Workload (Hours)</text></svg>
</div></body></html>
